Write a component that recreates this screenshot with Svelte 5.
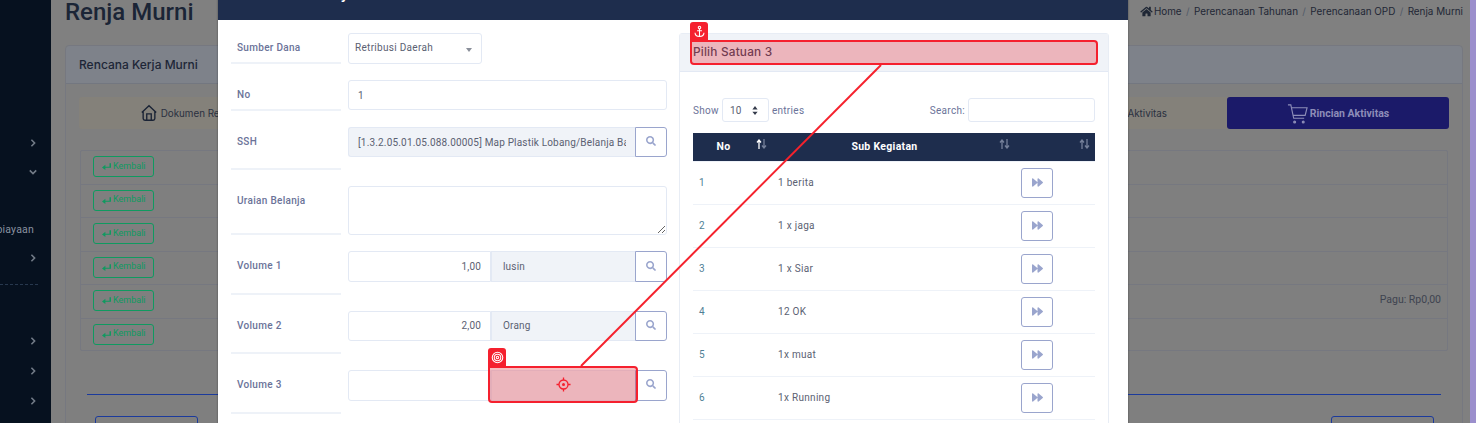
<script lang="ts">
  const sideTop = [
    { open: false, text: '' },
    { open: true, text: '' },
    { open: null, text: '' },
    { open: null, text: 'Pembiayaan' },
    { open: false, text: '' }
  ];
  const backRows = ['', '', '', '', 'Pagu: Rp0,00', ''];
  const satuan = ['1 berita', '1 x jaga', '1 x Siar', '12 OK', '1x muat', '1x Running'];
  const searchPath = 'M505 442.7L405.3 343c-4.5-4.5-10.6-7-17-7H372c27.6-35.3 44-79.7 44-128C416 93.1 322.9 0 208 0S0 93.1 0 208s93.1 208 208 208c48.3 0 92.7-16.4 128-44v16.3c0 6.4 2.5 12.5 7 17l99.7 99.7c9.4 9.4 24.6 9.4 33.9 0l28.3-28.3c9.4-9.4 9.4-24.6.1-34zM208 336c-70.7 0-128-57.2-128-128 0-70.7 57.2-128 128-128 70.7 0 128 57.2 128 128 0 70.7-57.2 128-128 128z';
  const forwardPath = 'M500.5 231.4l-192-160C287.9 54.3 256 68.6 256 96v320c0 27.4 31.9 41.8 52.5 24.6l192-160c15.3-12.8 15.3-36.4 0-49.2zm-256 0l-192-160C31.9 54.3 0 68.6 0 96v320c0 27.4 31.9 41.8 52.5 24.6l192-160c15.3-12.8 15.3-36.4 0-49.2z';
  const homePath = 'M280.37 148.26L96 300.11V464a16 16 0 0 0 16 16l112.06-.29a16 16 0 0 0 15.92-16V368a16 16 0 0 1 16-16h64a16 16 0 0 1 16 16v95.64a16 16 0 0 0 16 16.05L464 480a16 16 0 0 0 16-16V300L295.67 148.26a12.19 12.19 0 0 0-15.3 0zM571.6 251.47L488 182.56V44.05a12 12 0 0 0-12-12h-56a12 12 0 0 0-12 12v72.61L318.47 43a48 48 0 0 0-61 0L4.34 251.47a12 12 0 0 0-1.6 16.9l25.5 31A12 12 0 0 0 45.15 301l235.22-193.74a12.19 12.19 0 0 1 15.3 0L530.9 301a12 12 0 0 0 16.9-1.6l25.5-31a12 12 0 0 0-1.7-16.93z';
</script>

{#snippet chevron(open)}
  <svg class="chev" viewBox="0 0 10 10">
    <polyline points={open ? '1,3 5,7 9,3' : '3,1 7,5 3,9'} />
  </svg>
{/snippet}

{#snippet searchBtn()}
  <button class="search-btn" aria-label="Cari">
    <svg viewBox="0 0 512 512"><path d={searchPath} /></svg>
  </button>
{/snippet}

{#snippet sortIcon(active)}
  <svg class="sort" viewBox="0 0 11 10">
    <path class:on={active} d="M3 10V2M1 3.500 3 1l2 2.500" />
    <path d="M8 0v8M6 6.500 8 9l2-2.500" />
  </svg>
{/snippet}

<div class="screen">
  <div class="page">
    <aside class="sidebar">
      {#each sideTop as item}
        <div class="side-item">
          {#if item.text}<span class="side-text">{item.text}</span>{/if}
          {#if item.open !== null}{@render chevron(item.open)}{/if}
        </div>
      {/each}
      <div class="side-divider"></div>
      {#each [0, 1, 2] as i (i)}
        <div class="side-item tall">{@render chevron(false)}</div>
      {/each}
    </aside>

    <main class="main">
      <header class="topbar">
        <h1>Renja Murni</h1>
        <nav class="crumbs">
          <svg viewBox="0 0 576 512"><path d={homePath} /></svg>
          <span>Home</span><i>/</i><span>Perencanaan Tahunan</span><i>/</i><span>Perencanaan OPD</span><i>/</i><span>Renja Murni</span>
        </nav>
      </header>

      <section class="card">
        <div class="card-head">Rencana Kerja Murni</div>
        <div class="card-body">
          <div class="tabs">
            <div class="tab first">
              <svg class="tab-icon" viewBox="0 0 20 20">
                <path d="M2 9.500 10 2l8 7.500M3.500 8.500V16a2 2 0 0 0 2 2h9a2 2 0 0 0 2-2V8.500M7.500 18v-7h5v7" />
              </svg>
              Dokumen Renja
            </div>
            <div class="tab-gap"></div>
            <div class="tab last">Sub Aktivitas</div>
            <div class="tab active">
              <svg class="cart" viewBox="0 0 22 22">
                <path d="M1 2h3l3 14h11M5 5h16l-2 8H6.600" />
                <circle cx="8" cy="20" r="1" /><circle cx="17" cy="20" r="1" />
              </svg>
              Rincian Aktivitas
            </div>
          </div>

          <div class="back-list">
            {#each backRows as note}
              <div class="back-row">
                <button class="back-btn">
                  <svg viewBox="0 0 12 10"><path d="M10 0h2v6H4.500v3L0 5.500 4.500 2v2.500H10z" /></svg>
                  <span>Kembali</span>
                </button>
                {#if note}<span class="note">{note}</span>{/if}
              </div>
            {/each}
          </div>

          <div class="rule"></div>
          <div class="foot-btns">
            <div class="outline wide"></div>
            <div class="outline"></div>
          </div>
        </div>
      </section>
    </main>
  </div>
  <div class="strip"></div>

  <div class="modal">
    <div class="modal-head">Rincian Belanja</div>
    <div class="modal-body">
      <form class="form">
        <div class="row">
          <label class="lbl" for="dana">Sumber Dana</label>
          <div class="select2" id="dana">Retribusi Daerah<span class="caret"></span></div>
        </div>
        <div class="row">
          <label class="lbl" for="no">No</label>
          <input id="no" class="input full" value="1" />
        </div>
        <div class="row">
          <label class="lbl" for="ssh">SSH</label>
          <div class="group">
            <input id="ssh" class="input grey grow joined" readonly value="[1.3.2.05.01.05.088.00005] Map Plastik Lobang/Belanja Barang Pakai Habis" />
            {@render searchBtn()}
          </div>
        </div>
        <div class="row">
          <label class="lbl" for="uraian">Uraian Belanja</label>
          <textarea id="uraian" class="input area"></textarea>
        </div>
        <div class="row">
          <label class="lbl" for="v1">Volume 1</label>
          <div class="group">
            <input id="v1" class="input num" value="1,00" />
            <input class="input grey grow joined unit" readonly value="lusin" />
            {@render searchBtn()}
          </div>
        </div>
        <div class="row">
          <label class="lbl" for="v2">Volume 2</label>
          <div class="group">
            <input id="v2" class="input num" value="2,00" />
            <input class="input grey grow joined unit" readonly value="Orang" />
            {@render searchBtn()}
          </div>
        </div>
        <div class="row">
          <label class="lbl" for="v3">Volume 3</label>
          <div class="group">
            <input id="v3" class="input num" value="" />
            <input class="input grey grow joined unit" readonly value="" />
            {@render searchBtn()}
          </div>
        </div>
      </form>

      <section class="panel">
        <div class="panel-head">Pilih Satuan 3</div>
        <div class="panel-body">
          <div class="dt-top">
            <div class="dt-len">
              Show
              <div class="len-select">10
                <svg viewBox="0 0 8 12"><path d="M4 0l3.500 4.500h-7zM4 12L.5 7.500h7z" /></svg>
              </div>
              entries
            </div>
            <div class="dt-search">Search: <input class="input find" /></div>
          </div>
          <table>
            <thead>
              <tr>
                <th class="c-no">No{@render sortIcon(true)}</th>
                <th class="c-sub">Sub Kegiatan{@render sortIcon(false)}</th>
                <th class="c-act">{@render sortIcon(false)}</th>
              </tr>
            </thead>
            <tbody>
              {#each satuan as name, i}
                <tr>
                  <td class="no">{i + 1}</td>
                  <td>{name}</td>
                  <td>
                    <button class="pick" aria-label="Pilih">
                      <svg viewBox="0 0 512 512"><path d={forwardPath} /></svg>
                    </button>
                  </td>
                </tr>
              {/each}
            </tbody>
          </table>
        </div>
      </section>
    </div>
  </div>

  <!-- anotasi: sumber dan target -->
  <svg class="link" viewBox="0 0 1476 423" aria-hidden="true">
    <line x1="881" y1="65" x2="581" y2="366" />
  </svg>

  <div class="mark mark-top">
    <span class="mark-tab">
      <svg viewBox="0 0 16 16">
        <circle cx="8" cy="3" r="1.500" />
        <path d="M8 4.500V14M5 7h6M2.500 9.500c0 2.800 2.500 4.500 5.500 4.500s5.500-1.700 5.500-4.500" />
      </svg>
    </span>
  </div>
  <div class="mark mark-bottom">
    <span class="mark-tab">
      <svg viewBox="0 0 16 16">
        <circle cx="8" cy="8" r="6.500" /><circle cx="8" cy="8" r="4" /><circle cx="8" cy="8" r="1.500" />
      </svg>
    </span>
    <svg class="cross" viewBox="0 0 16 16">
      <circle cx="8" cy="8" r="4.800" />
      <circle class="dot" cx="8" cy="8" r="1.600" />
      <path d="M8 .5v2.700M8 12.800v2.700M.5 8h2.700M12.800 8h2.700" />
    </svg>
  </div>
</div>

<style>
  :global(body) {
    margin: 0;
    overflow: hidden;
    background: #808080;
  }

  .screen {
    position: relative;
    width: 1476px;
    height: 423px;
    overflow: hidden;
    display: flex;
    font-family: Roboto, "Liberation Sans", sans-serif;
  }

  .page {
    display: flex;
    width: 1470px;
    height: 423px;
    background: #808080;
    color: #3a3f4a;
  }

  .strip {
    width: 6px;
    background: #9b8fcc;
  }

  /* sidebar */
  .sidebar {
    width: 51px;
    flex: none;
    background: #06111f;
    padding-top: 128.600px;
    box-sizing: border-box;
  }

  .side-item {
    height: 28.800px;
    display: flex;
    align-items: center;
    justify-content: flex-end;
    padding-right: 14px;
    position: relative;
  }

  .side-item.tall {
    height: 30px;
  }

  .side-text {
    position: absolute;
    right: 17px;
    white-space: nowrap;
    font-size: 10.500px;
    color: #8a93a0;
    letter-spacing: 0.2px;
  }

  .chev {
    width: 8px;
    height: 8px;
    fill: none;
    stroke: #727b87;
    stroke-width: 2;
  }

  .side-divider {
    width: 38px;
    margin: 11.400px 0 41px;
    border-top: 1px dashed #27384e;
  }

  /* halaman belakang */
  .main {
    flex: 1;
    min-width: 0;
    padding: 0 7px 0 14px;
  }

  .topbar {
    height: 45px;
    display: flex;
    justify-content: space-between;
    align-items: flex-start;
  }

  h1 {
    margin: 0;
    font-size: 24px;
    line-height: 24px;
    font-weight: 500;
    color: #1b2536;
  }

  .crumbs {
    display: flex;
    align-items: center;
    gap: 4.400px;
    margin-top: 5px;
    font-family: Inter, sans-serif;
    font-size: 9.900px;
    line-height: 13px;
    color: #1f2735;
    white-space: nowrap;
  }

  .crumbs svg {
    width: 13px;
    height: 11px;
    fill: #1f2735;
    margin-right: -3px;
  }

  .crumbs i {
    font-style: normal;
    color: #525a68;
  }

  .card {
    border: 1px solid #767880;
    border-radius: 4px;
    background: #7f7f7f;
  }

  .card-head {
    height: 37px;
    line-height: 37px;
    padding-left: 13px;
    background: #7e828a;
    border-bottom: 1px solid #737780;
    font-family: Inter, sans-serif;
    font-size: 12px;
    font-weight: 500;
    color: #1d2637;
    border-radius: 4px 4px 0 0;
  }

  .card-body {
    padding: 13px 13px 0;
  }

  .tabs {
    display: flex;
    height: 32px;
    background: #84817a;
    border-radius: 3px;
    font-family: Inter, sans-serif;
    font-size: 9.800px;
    color: #2a3040;
  }

  .tab {
    display: flex;
    align-items: center;
    justify-content: center;
    width: 222px;
  }

  .tab.first {
    gap: 3px;
    width: 215px;
  }

  .tab-gap {
    flex: 1;
  }

  .tab.last {
    justify-content: flex-end;
    padding-right: 60px;
    box-sizing: border-box;
  }

  .tab-icon {
    width: 18px;
    height: 20px;
    fill: none;
    stroke: #1a2335;
    stroke-width: 1.500;
  }

  .tab.active {
    gap: 2px;
    background: #1b1a69;
    color: #8d8db8;
    font-family: Roboto, sans-serif;
    font-weight: 700;
    font-size: 10.500px;
    border-radius: 3px;
  }

  .cart {
    width: 21px;
    height: 21px;
    fill: none;
    stroke: #8d8db8;
    stroke-width: 1.200;
  }

  .cart circle {
    fill: #8d8db8;
  }

  .back-list {
    margin: 21px 1px 0;
    border: 1px solid #767880;
    border-radius: 2px;
    height: 201px;
    box-sizing: border-box;
  }

  .back-row {
    height: 33.500px;
    box-sizing: border-box;
    border-bottom: 1px solid #767880;
    display: flex;
    align-items: flex-start;
    justify-content: space-between;
    padding: 5px 6px 0 12px;
  }

  .back-row:last-child {
    border-bottom: none;
  }

  .back-btn {
    width: 61px;
    height: 21px;
    padding: 0 0 0 8px;
    border: 1px solid #0f9a60;
    border-radius: 3px;
    background: transparent;
    color: #0f9a60;
    font-family: Roboto, sans-serif;
    font-size: 9px;
    display: flex;
    align-items: center;
    gap: 2px;
  }

  .back-btn span {
    margin-top: -2px;
  }

  .back-btn svg {
    width: 9px;
    height: 8px;
    fill: #0f9a60;
    margin-top: 1px;
  }

  .note {
    margin-top: 3px;
    font-size: 10.500px;
    color: #3e4350;
  }

  .rule {
    margin: 43px 8px 0;
    height: 1px;
    background: #1b3a9c;
  }

  .foot-btns {
    display: flex;
    justify-content: space-between;
    margin: 21px 15px 0 16px;
  }

  .outline {
    width: 101px;
    height: 30px;
    border: 1px solid #1b3a9c;
    border-radius: 3px;
  }

  /* modal */
  .modal {
    position: absolute;
    left: 218px;
    top: -30px;
    width: 910px;
    height: 480px;
    background: #fff;
    box-shadow: 0 0 2px rgba(0, 0, 0, 0.4);
  }

  .modal-head {
    height: 50px;
    box-sizing: border-box;
    padding: 15px 0 0 33px;
    background: #1e2d4d;
    color: #fff;
    font-size: 15px;
    font-weight: 500;
    line-height: 18px;
  }

  .modal-body {
    display: flex;
    gap: 12px;
    padding: 13px 19px 0 13px;
    font-size: 10px;
    letter-spacing: 0.3px;
  }

  .form {
    width: 436px;
    flex: none;
    display: flex;
    flex-direction: column;
    gap: 16px;
  }

  .row {
    display: flex;
    gap: 7px;
    min-height: 31px;
  }

  .lbl {
    width: 110px;
    flex: none;
    box-sizing: border-box;
    padding: 9px 0 0 6px;
    border-bottom: 2px solid #eef2f8;
    color: #6b7399;
    font-weight: 500;
  }

  .input {
    box-sizing: border-box;
    height: 30.400px;
    border: 1px solid #e3e9f4;
    border-radius: 3px;
    padding: 0 9px;
    font: inherit;
    letter-spacing: 0.18px;
    color: #5b6172;
    background: #fff;
    outline: none;
  }

  .full {
    width: 319px;
  }

  .grey {
    background: #f0f3f8;
  }

  .select2 {
    box-sizing: border-box;
    position: relative;
    width: 134px;
    height: 31px;
    border: 1px solid #e3e9f4;
    border-radius: 3px;
    padding-left: 6px;
    line-height: 28px;
    color: #5b6172;
  }

  .caret {
    position: absolute;
    right: 9px;
    top: 14px;
    border: 3.500px solid transparent;
    border-top: 4px solid #8a8f9a;
    border-bottom: 0;
  }

  .group {
    display: flex;
    width: 319px;
    height: 30.400px;
    margin-bottom: 13px;
  }

  .grow {
    flex: 1;
    min-width: 0;
  }

  .joined {
    border-radius: 3px 0 0 3px;
    border-right: none;
  }

  .num {
    width: 143px;
    flex: none;
    text-align: right;
    border-radius: 3px 0 0 3px;
    border-right: 1px solid #e3e9f4;
  }

  .unit {
    border-radius: 0;
    padding-left: 11px;
  }

  .area {
    display: block;
    width: 319px;
    height: 49px;
  }

  .search-btn {
    width: 32px;
    flex: none;
    height: 30.400px;
    padding: 0;
    background: #fff;
    border: 1px solid #9aa5cd;
    border-radius: 0 3px 3px 0;
    display: flex;
    align-items: center;
    justify-content: center;
  }

  .search-btn svg {
    width: 10px;
    height: 10px;
    fill: #9aa5cd;
    margin-top: -2px;
  }

  /* panel kanan */
  .panel {
    width: 430px;
    flex: none;
    box-sizing: border-box;
    border: 1px solid #e8edf5;
    border-radius: 3px;
    height: 420px;
  }

  .panel-head {
    height: 38px;
    box-sizing: border-box;
    padding: 11px 0 0 13px;
    background: #f0f3f8;
    border-bottom: 1px solid #e3e9f4;
    font-family: Inter, sans-serif;
    font-size: 11.800px;
    font-weight: 500;
    letter-spacing: 0.2px;
    color: #3f465f;
  }

  .panel-body {
    padding: 26px 13px 0;
    color: #6b7399;
  }

  .dt-top {
    display: flex;
    justify-content: space-between;
    align-items: center;
    height: 24px;
    margin-bottom: 11px;
  }

  .dt-len,
  .dt-search {
    display: flex;
    align-items: center;
    gap: 3px;
  }

  .len-select {
    box-sizing: border-box;
    width: 47px;
    height: 24px;
    border: 1px solid #e3e9f4;
    border-radius: 3px;
    display: flex;
    align-items: center;
    justify-content: space-between;
    padding: 0 10px 0 7px;
    color: #5b6172;
  }

  .len-select svg {
    width: 6px;
    height: 9px;
    fill: #333a4a;
  }

  .find {
    width: 127px;
    height: 24px;
  }

  table {
    width: 402px;
    border-collapse: collapse;
    table-layout: fixed;
  }

  th {
    position: relative;
    box-sizing: border-box;
    height: 28px;
    padding: 0 24px 0 6px;
    background: #1e2d4d;
    color: #fff;
    font-size: 10.500px;
    font-weight: 700;
    text-align: center;
    border-bottom: 1px solid #eef2f8;
  }

  .c-no {
    width: 79px;
  }

  .c-act {
    width: 80px;
  }

  .sort {
    position: absolute;
    right: 5px;
    top: 6px;
    width: 11px;
    height: 10px;
    fill: none;
    stroke: #75809a;
    stroke-width: 1.300;
  }

  .sort .on {
    stroke: #fff;
  }

  td {
    height: 43px;
    padding: 0 6px;
    box-sizing: border-box;
    border-bottom: 1px solid #eef2f8;
    color: #5b6172;
  }

  td.no {
    color: #4f7f96;
  }

  .pick {
    display: flex;
    align-items: center;
    justify-content: center;
    width: 32px;
    height: 30px;
    padding: 0;
    background: #fff;
    border: 1px solid #9aa5cd;
    border-radius: 3px;
  }

  .pick svg {
    width: 11px;
    height: 11px;
    fill: #9aa5cd;
  }

  /* anotasi */
  .link {
    position: absolute;
    inset: 0;
    width: 1476px;
    height: 423px;
    pointer-events: none;
  }

  .link line {
    stroke: #f5222d;
    stroke-width: 2;
  }

  .mark {
    position: absolute;
    box-sizing: border-box;
    border: 2px solid #f5202e;
    border-radius: 4px;
    background: rgba(230, 40, 50, 0.3);
    display: flex;
    align-items: center;
    justify-content: center;
  }

  .mark-top {
    left: 690px;
    top: 40px;
    width: 408px;
    height: 25px;
    border-top-left-radius: 0;
  }

  .mark-bottom {
    left: 488px;
    top: 366px;
    width: 150px;
    height: 37px;
    border-top-left-radius: 0;
  }

  .mark-tab {
    position: absolute;
    left: -2px;
    top: -20px;
    width: 18px;
    height: 18px;
    background: #f5202e;
    border-radius: 3px 3px 0 0;
    display: flex;
    align-items: center;
    justify-content: center;
  }

  .mark-tab svg {
    width: 13px;
    height: 13px;
    fill: none;
    stroke: #fff;
    stroke-width: 1.300;
  }

  .cross {
    width: 15px;
    height: 15px;
    fill: none;
    stroke: #f5202e;
    stroke-width: 1.400;
  }

  .cross .dot {
    fill: #f5202e;
    stroke: none;
  }
</style>
